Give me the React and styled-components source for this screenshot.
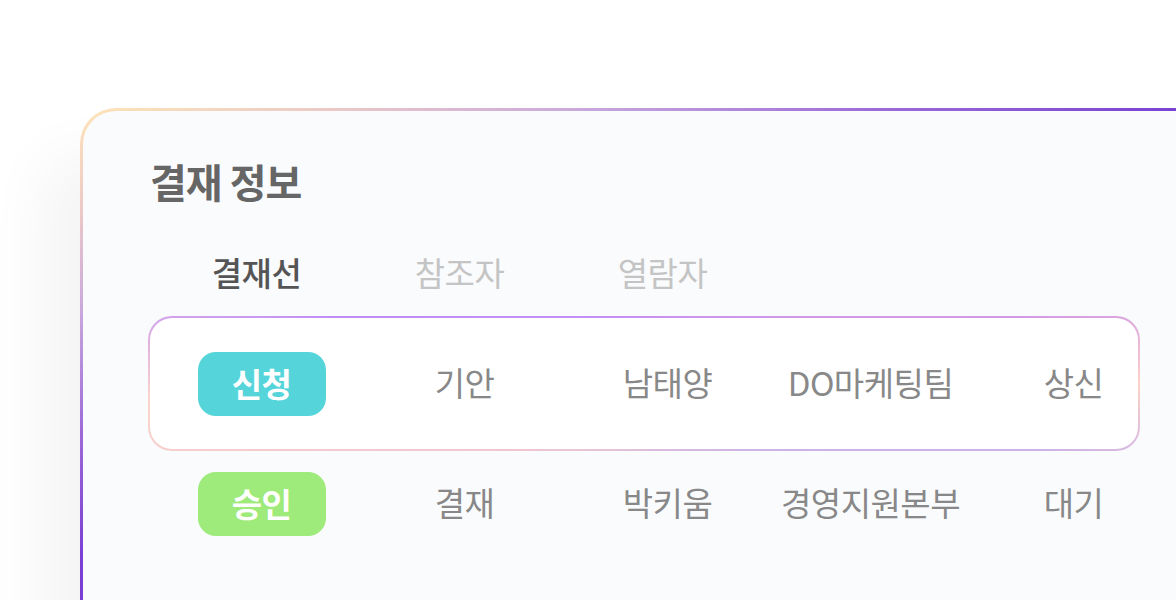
import React from 'react';
import styled, { createGlobalStyle } from 'styled-components';

const GlobalStyle = createGlobalStyle`
  html, body {
    margin: 0;
    padding: 0;
    background: #ffffff;
    overflow: hidden;
  }
  body {
    font-family: "Noto Sans CJK KR", "Noto Sans", sans-serif;
  }
`;

const Page = styled.div`
  width: 1176px;
  height: 600px;
  padding: 108px 0 0 80px;
  box-sizing: border-box;
  overflow: hidden;
`;

const Card = styled.section`
  width: 1130px;
  height: 560px;
  box-sizing: border-box;
  border: 3px solid transparent;
  border-radius: 36px;
  background:
    linear-gradient(#fafbfd, #fafbfd) padding-box,
    linear-gradient(158deg, #fee4b8 0%, #ecc9c6 10%, #c9a8dc 20%, #9d69d8 32%, #7b40d3 44%, #6a30c8 100%) border-box;
  box-shadow: -40px 45px 60px rgba(0, 0, 0, 0.045);
  padding: 45px 0 0 65px;
`;

const Title = styled.h2`
  margin: 0 0 0 2px;
  font-size: 40px;
  line-height: 50px;
  font-weight: 700;
  color: #666666;
  letter-spacing: -1px;
`;

const Tabs = styled.div`
  display: flex;
  margin: 44px 0 0 7px;
`;

const Tab = styled.div`
  width: 203px;
  text-align: center;
  font-size: 33px;
  line-height: 44px;
  font-weight: ${(p) => (p.active ? 500 : 400)};
  letter-spacing: -0.5px;
  color: ${(p) => (p.active ? '#555555' : '#c4c4c4')};
`;

const Rows = styled.div`
  margin-top: 22px;
`;

const Row = styled.div`
  width: 992px;
  box-sizing: border-box;
  display: grid;
  grid-template-columns: repeat(5, 203px);
  align-items: center;
  border: 2.5px solid transparent;
  border-radius: 24px;
  padding-left: 10px;
  height: ${(p) => (p.highlight ? '135px' : 'auto')};
  padding-top: ${(p) => (p.highlight ? '0' : '19px')};
  background: ${(p) =>
    p.highlight
      ? `linear-gradient(#ffffff, #ffffff) padding-box,
         conic-gradient(from 0deg, #c890f2 0deg, #d29ae6 80deg, #fdd3c8 90deg, #cbb2e8 100deg, #dcbedc 180deg, #f2c9cf 258deg, #fdd6ca 268deg, #c08df8 282deg, #c890f2 360deg) border-box`
      : 'transparent'};
`;

const Cell = styled.div`
  text-align: center;
  font-size: 33px;
  line-height: 44px;
  padding-bottom: 4px;
  font-weight: 400;
  letter-spacing: -0.5px;
  color: #888888;
`;

const Badge = styled.div`
  justify-self: center;
  width: 128px;
  height: 64px;
  box-sizing: border-box;
  padding-bottom: 2px;
  border-radius: 18px;
  background: ${(p) => p.color};
  color: #ffffff;
  font-size: 33px;
  font-weight: 700;
  letter-spacing: -0.5px;
  display: flex;
  align-items: center;
  justify-content: center;
`;

const lines = [
  { status: '신청', color: '#55d4da', type: '기안', name: '남태양', dept: 'DO마케팅팀', state: '상신', highlight: true },
  { status: '승인', color: '#9eea7a', type: '결재', name: '박키움', dept: '경영지원본부', state: '대기' },
];

export default function App() {
  return (
    <>
      <GlobalStyle />
      <Page>
        <Card>
          <Title>결재 정보</Title>
          <Tabs>
            <Tab active>결재선</Tab>
            <Tab>참조자</Tab>
            <Tab>열람자</Tab>
          </Tabs>
          <Rows>
            {lines.map((l) => (
              <Row key={l.name} highlight={l.highlight}>
                <Badge color={l.color}>{l.status}</Badge>
                <Cell>{l.type}</Cell>
                <Cell>{l.name}</Cell>
                <Cell>{l.dept}</Cell>
                <Cell>{l.state}</Cell>
              </Row>
            ))}
          </Rows>
        </Card>
      </Page>
    </>
  );
}
